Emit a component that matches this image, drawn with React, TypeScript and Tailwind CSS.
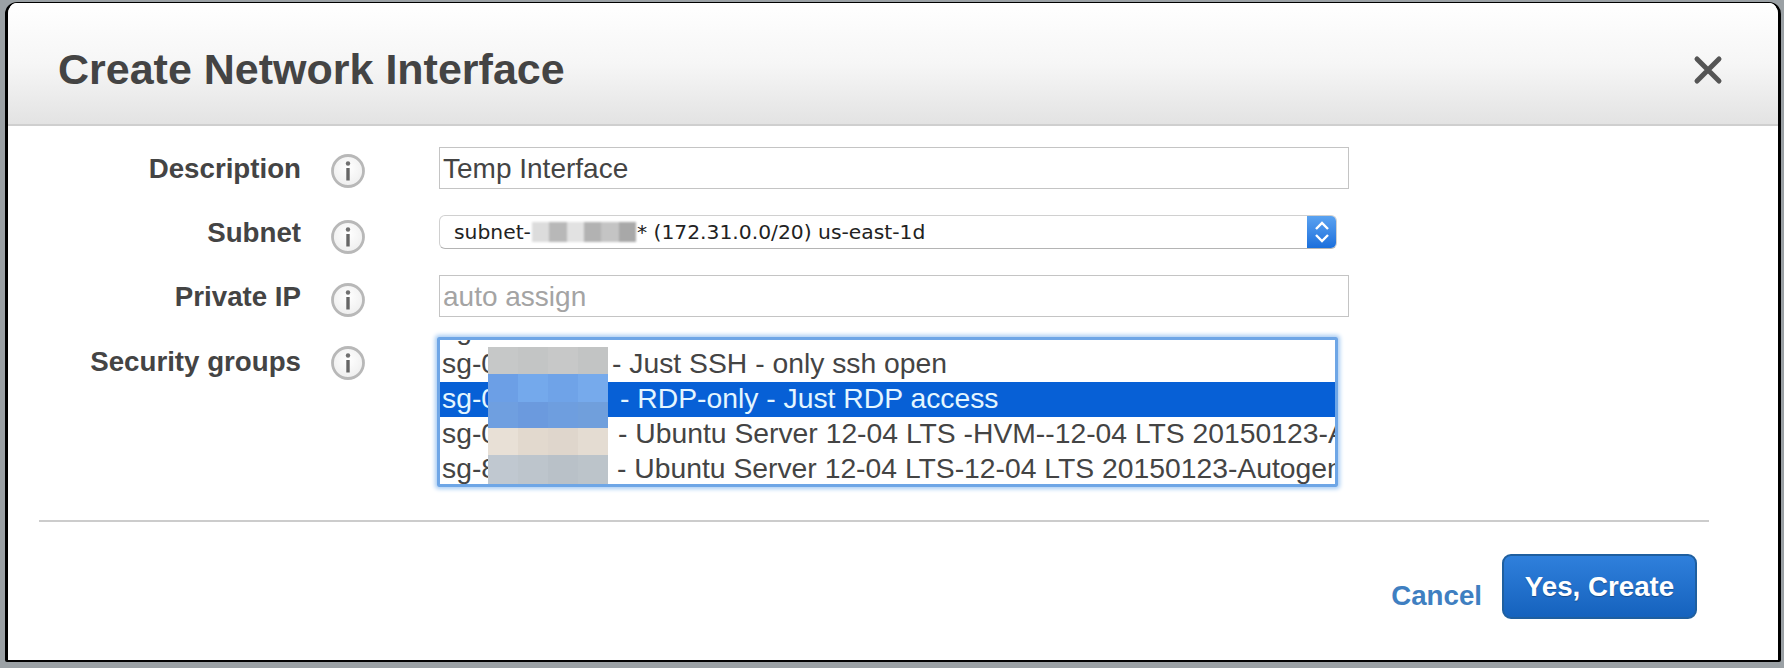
import React from 'react';

const FONT = "font-['Liberation_Sans',Arial,sans-serif]";

const InfoIcon = () => (
  <svg width="36" height="36" viewBox="0 0 36 36" className="block">
    <defs>
      <radialGradient id="infoFill" cx="50%" cy="40%" r="60%">
        <stop offset="0%" stopColor="#ffffff" />
        <stop offset="100%" stopColor="#eeeeee" />
      </radialGradient>
    </defs>
    <circle cx="18" cy="18" r="15.5" fill="url(#infoFill)" stroke="#b8b8b8" strokeWidth="2.8" />
    <circle cx="18" cy="10.5" r="2.2" fill="#707070" />
    <path d="M18 15v12.5" stroke="#666" strokeWidth="3.4" fill="none" />
  </svg>
);

const Label = ({ children, iconClass }: { children: React.ReactNode; iconClass: string }) => (
  <div className="flex h-[34px] items-start justify-end gap-[29px]">
    <span className="shrink-0 whitespace-nowrap text-[27.7px] font-bold leading-[42px] text-[#444]">{children}</span>
    <span className={`mr-[73px] shrink-0 ${iconClass}`}>
      <InfoIcon />
    </span>
  </div>
);

const BLUR_TOP = ['bg-[#c6c8c8]', 'bg-[#c3c5c5]', 'bg-[#c7c8c8]', 'bg-[#c2c4c4]'];
const BLUR_BLUE1 = ['bg-[#6c9fe6]', 'bg-[#74a9ec]', 'bg-[#6fa3e8]', 'bg-[#76aaec]'];
const BLUR_BLUE2 = ['bg-[#6f9fe0]', 'bg-[#6b9ade]', 'bg-[#6e9edf]', 'bg-[#709fdc]'];
const BLUR_BEIGE = ['bg-[#e8e0d6]', 'bg-[#e2d9ce]', 'bg-[#dfd6cc]', 'bg-[#e4dcd2]'];
const BLUR_GREY = ['bg-[#c0c8d0]', 'bg-[#bdc5cc]', 'bg-[#b9c1c8]', 'bg-[#bcc4ca]'];

const BlurRow = ({ cells, h }: { cells: string[]; h: string }) => (
  <div className={`grid grid-cols-4 ${h}`}>
    {cells.map((c, i) => (
      <div key={i} className={c} />
    ))}
  </div>
);

const OPTIONS = [
  { id: 'sg-0', gap: 'w-[115px]', text: '- Just SSH - only ssh open' },
  { id: 'sg-0', gap: 'w-[123px]', text: '- RDP-only - Just RDP access', selected: true },
  { id: 'sg-0', gap: 'w-[121px]', text: '- Ubuntu Server 12-04 LTS -HVM--12-04 LTS 20150123-Autogen' },
  { id: 'sg-8', gap: 'w-[120px]', text: '- Ubuntu Server 12-04 LTS-12-04 LTS 20150123-Autogen' },
];

export default function App() {
  return (
    <div className={`h-[668px] w-[1784px] overflow-hidden bg-[#9ba1a5] pl-[5px] pt-[2px] ${FONT}`}>
      <div className="flex h-[660px] w-[1776px] flex-col overflow-hidden rounded-t-[12px] rounded-b-[2px] border-x-[3px] border-b-[2px] border-t border-black bg-white">
        {/* header */}
        <div className="flex h-[123px] shrink-0 items-center justify-between border-b-2 border-[#cfcfcf] bg-gradient-to-b from-white via-[#f6f6f6] to-[#e3e3e3] pl-[50px] pr-[56px] pt-[12px]">
          <h1 className="text-[43px] font-bold leading-none text-[#444]">Create Network Interface</h1>
          <svg width="32" height="32" viewBox="0 0 32 32" className="mr-[-2px]">
            <path d="M5 5l22 22M27 5L5 27" stroke="#555" strokeWidth="5" strokeLinecap="round" />
          </svg>
        </div>

        {/* form */}
        <div className="grid grid-cols-[431px_910px] pt-[21px] text-[28px] text-[#444]">
          <div className="mt-[1px]">
            <Label iconClass="mt-[5px]">Description</Label>
          </div>
          <div className="flex h-[42px] items-center border border-[#c4c4c4] pl-[3px] pt-[2px]">Temp Interface</div>

          <div className="mt-[23px]">
            <Label iconClass="mt-[7px]">Subnet</Label>
          </div>
          <div className="mt-[26px] flex h-[34px] w-[898px] overflow-hidden rounded-[6px] border border-[#d0d0d0] border-b-[#b4b4b4]">
            <div className="flex flex-1 items-center pl-[14px] font-['DejaVu_Sans',sans-serif] text-[20.3px] text-[#222]">
              subnet-
              <span className="mx-[1px] grid h-[20px] w-[104px] grid-cols-6 blur-[1px]">
                <span className="bg-[#dcdcdc]" />
                <span className="bg-[#b8b8b8]" />
                <span className="bg-[#e2e2e2]" />
                <span className="bg-[#b2b2b2]" />
                <span className="bg-[#c4c4c4]" />
                <span className="bg-[#a8a8a8]" />
              </span>
              * (172.31.0.0/20) us-east-1d
            </div>
            <div className="flex w-[29px] items-center justify-center bg-gradient-to-b from-[#5aa2f0] to-[#1a6fdc]">
              <svg width="18" height="28" viewBox="0 0 18 28">
                <path d="M3 11l6-6 6 6M3 17l6 6 6-6" stroke="#fff" strokeWidth="2.4" fill="none" />
              </svg>
            </div>
          </div>

          <div className="mt-[27px]">
            <Label iconClass="mt-[6px]">Private IP</Label>
          </div>
          <div className="mt-[26px] flex h-[42px] items-center border border-[#c4c4c4] pl-[3px] pt-[2px] text-[#a4a4a4]">auto assign</div>

          <div className="mt-[24px]">
            <Label iconClass="mt-[4px]">Security groups</Label>
          </div>
          <div className="relative mt-[20px] ml-[-2px] h-[150px] w-[901px] overflow-hidden rounded-[2px] border-[3px] border-[#6ea6e6] text-[28.3px] shadow-[0_0_4px_2px_#a9cdf3]">
            <div className="h-[7px] overflow-hidden bg-white pl-[2px] text-[#444]">
              <div className="mt-[-28px] leading-[35px]">sg-0</div>
            </div>
            {OPTIONS.map((o) => (
              <div
                key={o.text}
                className={`flex h-[35px] items-center overflow-hidden whitespace-nowrap pb-[3px] pl-[2px] ${
                  o.selected ? 'bg-[#0760d6] text-[#e4f6ff]' : 'bg-white text-[#444]'
                }`}
              >
                <span>{o.id}</span>
                <span className={`inline-block shrink-0 ${o.gap}`} />
                <span>{o.text}</span>
              </div>
            ))}
            {/* redacted ids */}
            <div className="absolute left-[48px] top-[7px] flex h-[137px] w-[120px] flex-col">
              <BlurRow cells={BLUR_TOP} h="h-[27px]" />
              <BlurRow cells={BLUR_BLUE1} h="h-[28px]" />
              <BlurRow cells={BLUR_BLUE2} h="h-[26px]" />
              <BlurRow cells={BLUR_BEIGE} h="h-[27px]" />
              <BlurRow cells={BLUR_GREY} h="h-[29px]" />
            </div>
          </div>
        </div>

        {/* footer */}
        <div className="ml-[31px] mt-[33px] h-[2px] w-[1670px] bg-[#cccccc]" />
        <div className="flex items-start justify-end pr-[81px] pt-[32px]">
          <a className="mt-[24px] mr-[20px] text-[27.7px] font-bold leading-[36px] text-[#3f7fc1]">Cancel</a>
          <button className="flex h-[65px] w-[195px] items-center justify-center rounded-[9px] border-2 border-[#1f5f9f] bg-gradient-to-b from-[#2f80dc] to-[#1562bd] text-[27.7px] font-bold text-white [text-shadow:0_1px_1px_rgba(0,0,0,0.3)]">
            Yes, Create
          </button>
        </div>
      </div>
    </div>
  );
}
